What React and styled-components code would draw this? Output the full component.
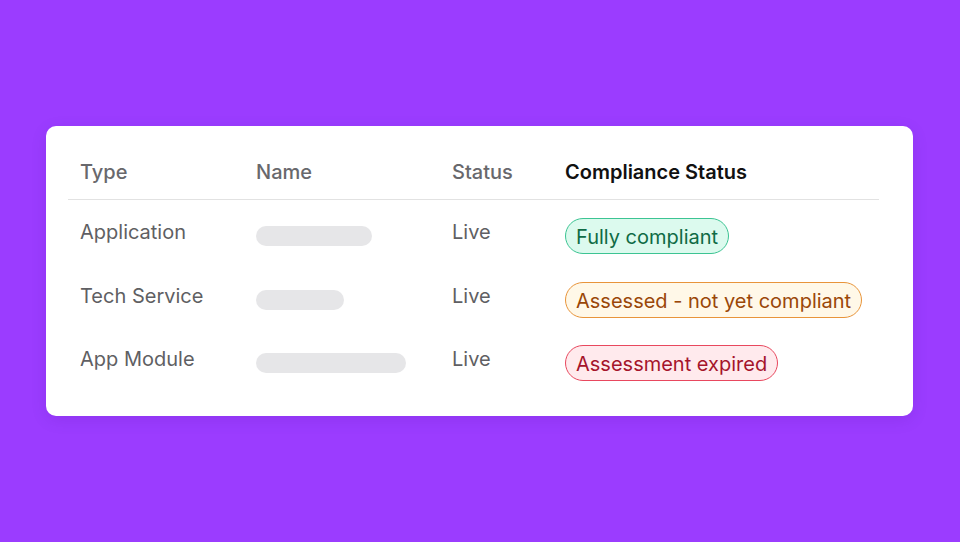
import React from 'react';
import styled, { createGlobalStyle } from 'styled-components';

const Global = createGlobalStyle`
  html, body { margin: 0; padding: 0; }
  body { background: #9b3cff; font-family: Inter, 'Noto Sans', sans-serif; }
`;

const Page = styled.div`
  width: 960px;
  height: 542px;
  box-sizing: border-box;
  padding: 126px 47px 0 46px;
`;

const Card = styled.div`
  background: #fff;
  border-radius: 10px;
  padding: 24px 34px 25px 22px;
  box-shadow: 0 4px 16px rgba(60, 0, 120, 0.12);
`;

const Row = styled.div`
  display: grid;
  grid-template-columns: 188px 196px 113px 1fr;
  align-items: start;
  height: ${(p) => (p.$head ? '50px' : '63.5px')};
  box-sizing: border-box;
  padding-top: ${(p) => (p.$head ? '8px' : '18px')};
  border-bottom: ${(p) => (p.$head ? '1px solid #e2e2e2' : 'none')};
  font-size: 20px;
  line-height: 28px;
  color: #5f5f63;
`;

const Head = styled.div`
  font-weight: 500;
  color: ${(p) => (p.$dark ? '#111' : '#68686c')};
  ${(p) => p.$dark && 'font-weight: 600;'}
  padding-left: ${(p) => (p.$first ? '12px' : '0')};
`;

const Cell = styled.div`
  padding-left: ${(p) => (p.$first ? '12px' : '0')};
`;

const Bar = styled.div`
  margin-top: 8px;
  height: 20px;
  border-radius: 10px;
  background: #e6e6e8;
`;

const tones = {
  green: ['#dcfaee', '#3cc493', '#0f6b45'],
  orange: ['#fff8e8', '#e8943a', '#9a4708'],
  red: ['#ffeaed', '#e8485e', '#a5142b'],
};

const Pill = styled.span`
  display: inline-flex;
  align-items: center;
  height: 36px;
  box-sizing: border-box;
  padding: 2px 10px 0;
  border-radius: 18px;
  background: ${(p) => tones[p.$tone][0]};
  border: 1px solid ${(p) => tones[p.$tone][1]};
  color: ${(p) => tones[p.$tone][2]};
  font-size: 20px;
  white-space: nowrap;
`;

const rows = [
  { type: 'Application', bar: 116, tone: 'green', label: 'Fully compliant' },
  { type: 'Tech Service', bar: 88, tone: 'orange', label: 'Assessed - not yet compliant' },
  { type: 'App Module', bar: 150, tone: 'red', label: 'Assessment expired' },
];

export default function App() {
  return (
    <Page>
      <Global />
      <Card>
        <Row $head>
          <Head $first>Type</Head>
          <Head>Name</Head>
          <Head>Status</Head>
          <Head $dark>Compliance Status</Head>
        </Row>
        {rows.map((r) => (
          <Row key={r.type}>
            <Cell $first>{r.type}</Cell>
            <Cell><Bar style={{ width: r.bar }} /></Cell>
            <Cell>Live</Cell>
            <Cell><Pill $tone={r.tone}>{r.label}</Pill></Cell>
          </Row>
        ))}
      </Card>
    </Page>
  );
}
